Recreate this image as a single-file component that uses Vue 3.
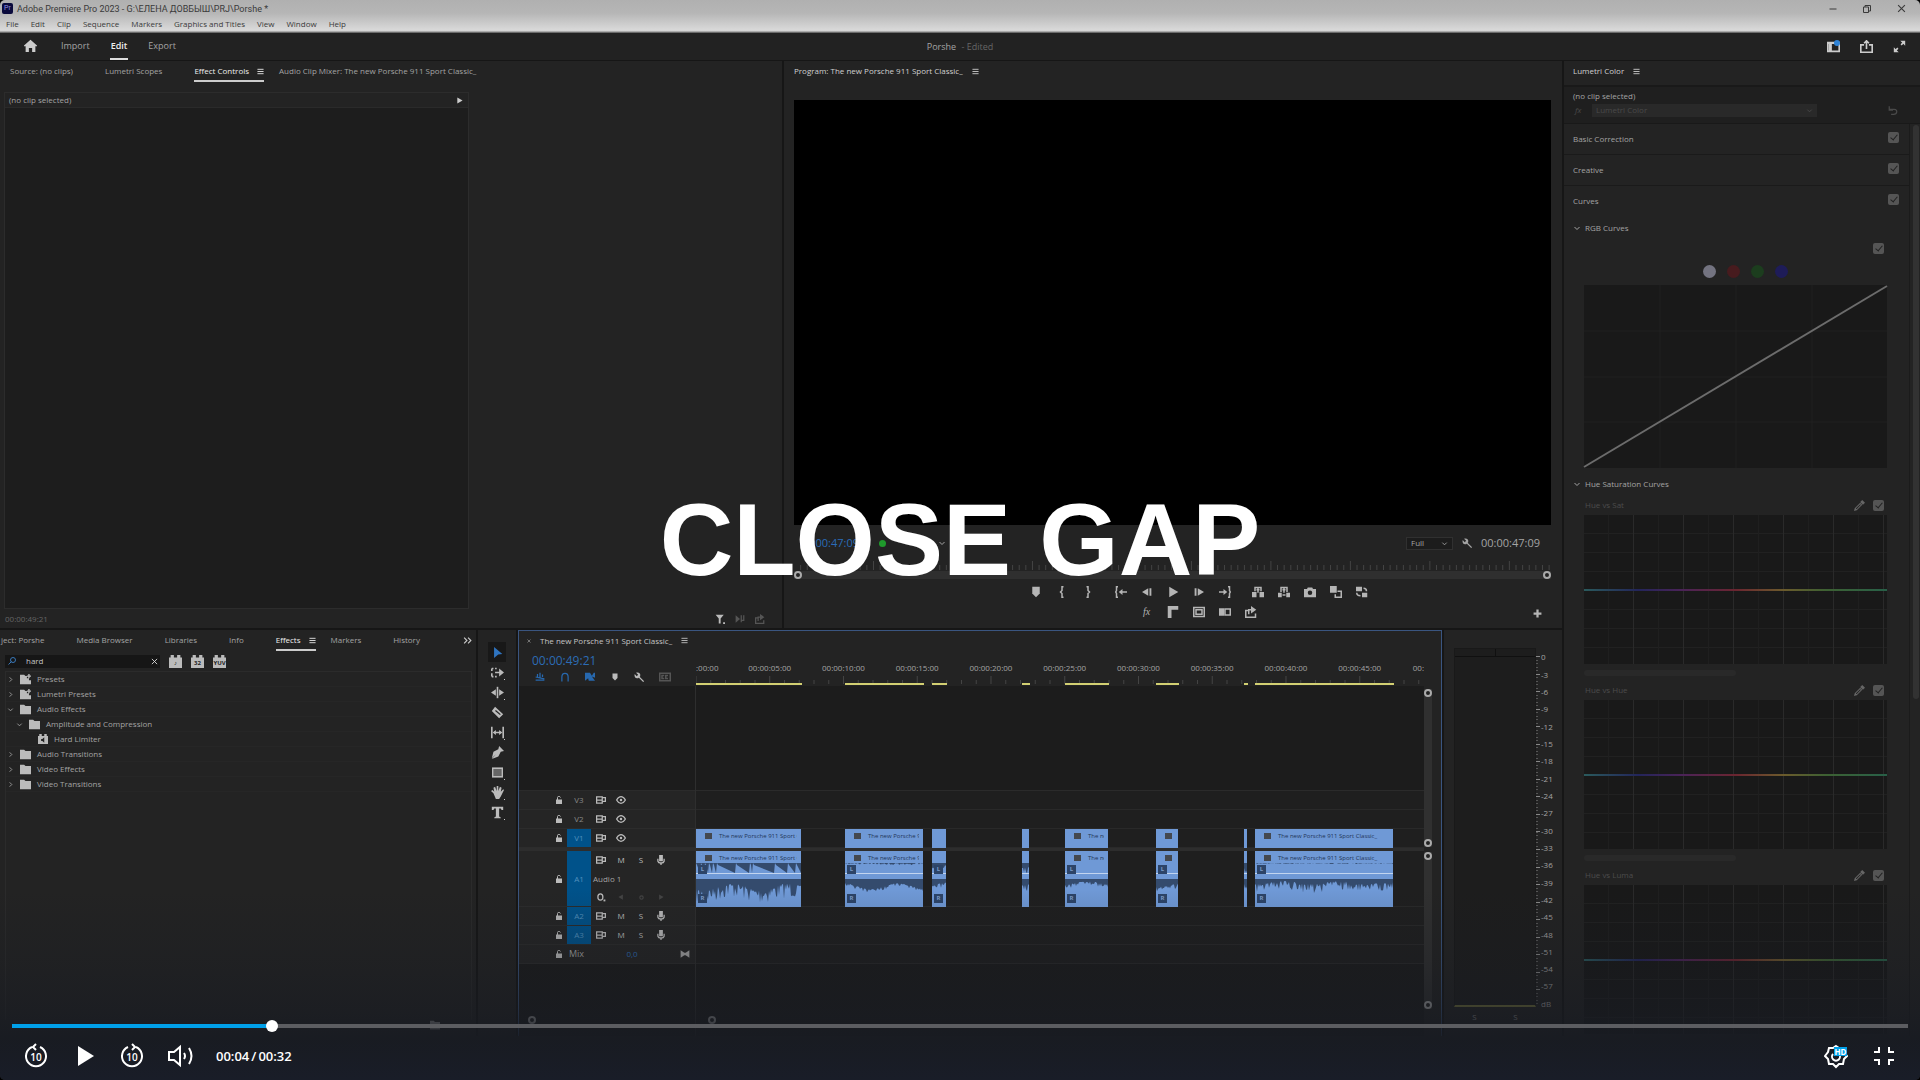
<script setup>
import { ref, h } from 'vue'

// filled and stroked outlines on a 16 x 16 grid
const icons = {
  home: { fill: 'M8 1 0 8v1h2v7h4v-5h4v5h4V9h2V8z' },
  workspace: { line: 'M1 3h14v11H1zM1 4h14', fill: 'M2 5h4v9H2z' },
  share: { line: 'M5 6H1v9h14V6h-4M8 11V2M5 4l3-3 3 3' },
  expand: { line: 'M10 6l4-4M6 10l-4 4', fill: 'M9 1h6v6zM1 9v6h6z' },
  menu: { line: 'M1 3h14M1 8h14M1 13h14' },
  min: { line: 'M1 8h14' },
  restore: { line: 'M1 4h10v11H1zM4 4V1h11v11h-4' },
  close: { line: 'M2 2l12 12M14 2 2 14' },
  down: { line: 'M3 6l5 5 5-5' },
  right: { line: 'M6 3l5 5-5 5' },
  more: { line: 'M2 3l5 5-5 5M9 3l5 5-5 5' },
  play: { fill: 'M3 1l12 7-12 7z' },
  back: { fill: 'M13 1 1 8l12 7z' },
  marker: { fill: 'M3 1h10v9l-5 5-5-5z' },
  braceL: { line: 'M10 1H8v5L6 8l2 2v5h2' },
  braceR: { line: 'M6 1h2v5l2 2-2 2v5H6' },
  goIn: { line: 'M4 1H2v5L1 8l1 2v5h2M9 8h7', fill: 'M5 8l5-4v8z' },
  goOut: { line: 'M12 1h2v5l1 2-1 2v5h-2M0 8h7', fill: 'M11 8 6 4v8z' },
  stepBack: { fill: 'M10 2 0 8l10 6zM12 2h3v12h-3z' },
  stepFwd: { fill: 'M6 2l10 6-10 6zM1 2h3v12H1z' },
  lift: { fill: 'M0 8h6v7H0zM10 8h6v7h-6z', line: 'M4 7V2h8v5M8 3v6M6 5h4' },
  extract: { fill: 'M0 9h5v6H0zM11 9h5v6h-5zM6 11h4v2H6z', line: 'M4 8V2h8v6M8 3v6M6 5h4' },
  camera: { fill: 'M0 4h4l1-2h6l1 2h4v11H0zM8 6a3 3 0 1 0 0 6 3 3 0 0 0 0-6z' },
  compare: { fill: 'M0 0h9v9H0z', line: 'M10 7h5v8H7v-4' },
  proxy: { fill: 'M0 1h8v6H0zM8 9h7v6H8z', line: 'M10 3c3 0 4 2 4 4M1 9c0 3 2 4 5 4' },
  rulers: { fill: 'M1 0h14v5H6v11H1z' },
  safe: { line: 'M1 2h14v12H1zM4 5h8v6H4z' },
  sides: { fill: 'M0 3h7v10H0z', line: 'M8 4h7v8H8z' },
  export: { line: 'M5 6H1v9h13v-5M5 11V5h5', fill: 'M8 0l7 5-7 5z' },
  skip: { fill: 'M1 2l7 6-7 6z', line: 'M10 2v11M14 2v8h-3' },
  plus: { fill: 'M6 1h4v5h5v4h-5v5H6v-5H1V6h5z' },
  wrench: { line: 'M6 6l8 8', fill: 'M1 3l3 3 2-2-3-3c4-1 7 1 6 5L6 9C2 10 0 7 1 3z' },
  filter: { fill: 'M1 1h13l-5 6v8H6V7zM13 13h3v3h-3z' },
  search: { line: 'M7 9l-6 6M10 1a5 5 0 1 0 0 10 5 5 0 0 0 0-10z' },
  folder: { fill: 'M0 1h6l2 2h8v12H0z' },
  preset: { fill: 'M0 1h6l2 2h2v3h3v3h3v6H0zM12 0h2v2h2v2h-2v2h-2V4h-2V2h2z' },
  brick: { fill: 'M2 3V0h4v3h4V0h4v3h2v13H0V3z' },
  effect: { fill: 'M2 3V0h4v3h4V0h4v3h2v13H0V3zM5 8v3h2l3 3V5L7 8z' },
  select: { fill: 'M3 0l12 10-6 1-6 5z' },
  trackSelect: { line: 'M1 3h2M5 3h2M1 13h2M5 13h2M1 3v3M1 9v4M5 8h7', fill: 'M10 3l6 5-6 5z' },
  ripple: { line: 'M8 1v14', fill: 'M6 4v8L0 8zM10 4v8l6-4z' },
  razor: { fill: 'M5 1l10 9-5 5L1 6zM5 6l1-1 6 5-1 1z' },
  slip: { line: 'M1 1v14M15 1v14M4 8h8', fill: 'M2 8l4-3v6zM14 8l-4-3v6z' },
  pen: { fill: 'M10 0l6 6-4 1-3 6-8 3 5-6-5 5 2-8 6-3z' },
  rect: { line: 'M1 2h14v12H1z' },
  hand: { fill: 'M3 9 0 6l2-1 2 2-1-5 2-1 2 5V0h2v6l2-5 2 1-1 5 3-3 1 1-4 8-2 3H6z' },
  type: { fill: 'M1 1h14v4h-2l-1-2h-2v10l2 1v1H4v-1l2-1V3H4L3 5H1z' },
  nest: { line: 'M1 13h14M4 3v5M8 1v9M12 4v4M1 8l14 3' },
  magnet: { line: 'M3 15V8c0-8 10-8 10 0v7' },
  linked: { fill: 'M0 1h8l3 5 3-5h2v8l-5-2 5 7H6l-1-4-5 4z' },
  cc: { line: 'M1 3h14v10H1zM7 6H4v4h3M12 6H9v4h3' },
  lock: { fill: 'M2 7h12v9H2z', line: 'M5 8V3c0-3 5-3 6 0' },
  sync: { line: 'M1 3h9v10H1zM1 8h9M11 4h4v6h-4' },
  eye: { line: 'M1 8c4-7 10-7 14 0-4 7-10 7-14 0z', fill: 'M8 6a2 2 0 1 0 0 4 2 2 0 0 0 0-4z' },
  mic: { fill: 'M5 0h6v10H5zM7 12h2v4H7z', line: 'M3 6v4c1 4 9 4 10 0V6' },
  key: { line: 'M7 3a4 5 0 1 0 0 10A4 5 0 0 0 7 3z', fill: 'M12 12h3v3h-3z' },
  dot: { line: 'M8 5a3 3 0 1 0 0 6 3 3 0 0 0 0-6z' },
  fit: { fill: 'M1 2l6 4h2l6-4v12l-6-4H7l-6 4z' },
  dropper: { fill: 'M12 0l4 4-3 3-4-4zM9 4l3 3-8 8-4 1 1-4zM9 6l-6 6v1h1l6-6z' },
  reset: { line: 'M2 7h8c6 0 5 8-1 8H5M2 2v6h6' }
}

const Icon = (props) => {
  const { fill, line } = icons[props.name]
  return h('svg', { viewBox: '0 0 16 16', width: props.size, height: props.size, 'aria-hidden': true }, [
    fill && h('path', { d: fill, fill: 'currentColor', 'fill-rule': 'evenodd' }),
    line && h('path', { d: line, fill: 'none', stroke: 'currentColor', 'stroke-width': 2 })
  ])
}
Icon.props = { name: String, size: { type: Number, default: 10 } }

const sequence = 'The new Porsche 911 Sport Classic_'
const menus = ['File', 'Edit', 'Clip', 'Sequence', 'Markers', 'Graphics and Titles', 'View', 'Window', 'Help']
const sourceTabs = ['Source: (no clips)', 'Lumetri Scopes', 'Effect Controls', 'Audio Clip Mixer: ' + sequence]
const effectTabs = ['ject: Porshe', 'Media Browser', 'Libraries', 'Info', 'Effects', 'Markers', 'History']

const query = ref('hard')
const tree = [
  { label: 'Presets', icon: 'preset', arrow: 'right', depth: 0 },
  { label: 'Lumetri Presets', icon: 'preset', arrow: 'right', depth: 0 },
  { label: 'Audio Effects', icon: 'folder', arrow: 'down', depth: 0 },
  { label: 'Amplitude and Compression', icon: 'folder', arrow: 'down', depth: 1 },
  { label: 'Hard Limiter', icon: 'effect', depth: 2 },
  { label: 'Audio Transitions', icon: 'folder', arrow: 'right', depth: 0 },
  { label: 'Video Effects', icon: 'folder', arrow: 'right', depth: 0 },
  { label: 'Video Transitions', icon: 'folder', arrow: 'right', depth: 0 }
]
const tools = ['select', 'trackSelect', 'ripple', 'razor', 'slip', 'pen', 'rect', 'hand', 'type']

const transport = [
  ['marker', 'braceL', 'braceR'],
  ['goIn', 'stepBack', 'play', 'stepFwd', 'goOut'],
  ['lift', 'extract', 'camera', 'compare', 'proxy']
]

// timeline geometry, in units of a 728-wide strip
const STRIP = 728
const pct = (n) => (n / STRIP) * 100 + '%'
const seconds = Array.from({ length: 50 }, (_, i) => i)
const labels = [1, 2, 3, 4, 5, 6, 7, 8, 9].map((i) => ({
  text: '00:00:' + String(i * 5).padStart(2, '0') + ':00',
  at: i * 73.75
}))

const wave = (w, base, spread, seed) => {
  let s = seed
  let points = '0,0'
  for (let x = 0; x <= w; x++) {
    s = (s * 16807) % 2147483647
    const r = s / 2147483647
    const swell = Math.sin(x / 9 + seed) * 0.3 + 0.7
    points += ` ${x},${Math.max(0, base * swell + (r * r) * spread).toFixed(1)}`
  }
  return points + ` ${w},0`
}
// lopsided bursts, each one growing towards its right edge
const bursts = (w, floor, depth) => {
  let points = '0,0'
  const starts = [0, 5, 9, 13, 17, 21, 40, 54, 57, 79, 92, 100, 106]
  starts.slice(0, -1).forEach((a, i) => {
    const b = Math.min(starts[i + 1] - 1, w)
    points += ` ${a},${floor} ${a + 1},${floor + depth * 0.2} ${b},${floor + depth} ${b + 1},${floor}`
  })
  return points + ` ${w},0`
}

const clips = [
  { at: 0, w: 105, top: bursts(105, 0, 10), low: wave(105, 11, 15, 7) },
  { at: 149, w: 78, top: wave(78, 0, 2, 11), low: wave(78, 10, 4, 5) },
  { at: 236, w: 14, top: wave(14, 6, 8, 3), low: wave(14, 9, 7, 3) },
  { at: 326, w: 7, top: wave(7, 6, 7, 9), low: wave(7, 8, 7, 9) },
  { at: 369, w: 43, top: '', low: wave(43, 6, 4, 21) },
  { at: 460, w: 22, top: '', low: wave(22, 8, 6, 14) },
  { at: 548, w: 3, top: wave(3, 8, 7, 6), low: wave(3, 8, 7, 6) },
  { at: 559, w: 138, top: wave(138, 0, 1, 17), low: wave(138, 5, 9, 33) }
]

const db = Array.from({ length: 20 }, (_, i) => (i ? String(-3 * i) : '0')).concat('dB')
const hueCurves = ['Hue vs Sat', 'Hue vs Hue', 'Hue vs Luma']
const progress = ref(13.5)
</script>

<template>
  <div class="player">
    <header class="titlebar">
      <div class="title-row">
        <span class="logo">Pr</span>
        <span class="title">Adobe Premiere Pro 2023 - G:\ЕЛЕНА ДОВБЫШ\PRJ\Porshe *</span>
        <div class="window-buttons">
          <button aria-label="Minimize"><Icon name="min" :size="8" /></button>
          <button aria-label="Restore"><Icon name="restore" :size="8" /></button>
          <button aria-label="Close"><Icon name="close" :size="9" /></button>
        </div>
      </div>
      <nav class="menu-row">
        <button v-for="m in menus" :key="m">{{ m }}</button>
      </nav>
    </header>

    <div class="appbar">
      <nav class="modes">
        <button aria-label="Home" class="home"><Icon name="home" :size="13" /></button>
        <button>Import</button>
        <button class="active">Edit</button>
        <button>Export</button>
      </nav>
      <div class="project">Porshe <span>- Edited</span></div>
      <div class="app-actions">
        <button aria-label="Workspaces" class="notify"><Icon name="workspace" :size="13" /></button>
        <button aria-label="Share"><Icon name="share" :size="13" /></button>
        <button aria-label="Full screen"><Icon name="expand" :size="13" /></button>
      </div>
    </div>

    <main class="workspace">
      <div class="upper">
        <section class="panel source">
          <nav class="tabs">
            <button v-for="t in sourceTabs" :key="t" :class="{ active: t === 'Effect Controls' }">
              {{ t }}<Icon v-if="t === 'Effect Controls'" name="menu" :size="7" />
            </button>
          </nav>
          <div class="controls-body">
            <div class="clip-row">(no clip selected)<Icon name="play" :size="7" /></div>
          </div>
          <footer class="source-footer">
            <span>00:00:49:21</span>
            <div>
              <Icon name="filter" class="lit" />
              <Icon name="skip" />
              <Icon name="export" />
            </div>
          </footer>
        </section>

        <section class="panel program">
          <nav class="tabs">
            <button class="strong">Program: {{ sequence }}<Icon name="menu" :size="7" /></button>
          </nav>
          <div class="video"></div>
          <div class="monitor-row">
            <span class="timecode blue">00:00:47:09</span>
            <i class="green"></i>
            <Icon name="down" :size="8" class="fit-arrow" />
            <label class="quality">
              <select aria-label="Playback resolution"><option>Full</option></select>
              <Icon name="down" :size="7" />
            </label>
            <Icon name="wrench" :size="11" />
            <span class="timecode">00:00:47:09</span>
          </div>
          <svg class="monitor-ruler" width="100%" height="10">
            <line v-for="i in 114" :key="i" :x1="i * 0.875 + '%'" :x2="i * 0.875 + '%'" :y1="i % 12 ? 4 : 0" y2="9" />
          </svg>
          <div class="scrub"><i></i><i></i></div>
          <div class="transport">
            <div v-for="(group, g) in transport" :key="g">
              <button v-for="b in group" :key="b" :aria-label="b"><Icon :name="b" :size="b.startsWith('step') ? 10 : 12" /></button>
            </div>
          </div>
          <div class="transport second">
            <div>
              <button aria-label="Effects" class="fx">fx</button>
              <button v-for="b in ['rulers', 'safe', 'sides', 'export']" :key="b" :aria-label="b"><Icon :name="b" :size="12" /></button>
            </div>
            <button class="add" aria-label="Button editor"><Icon name="plus" :size="9" /></button>
          </div>
        </section>
      </div>

      <div class="lower">
        <section class="panel effects">
          <nav class="tabs">
            <button v-for="t in effectTabs" :key="t" :class="{ active: t === 'Effects' }">
              {{ t }}<Icon v-if="t === 'Effects'" name="menu" :size="7" />
            </button>
            <button class="overflow" aria-label="More panels"><Icon name="more" :size="9" /></button>
          </nav>
          <div class="search-row">
            <label class="search">
              <Icon name="search" :size="8" />
              <input v-model="query" type="text" aria-label="Search effects" />
              <Icon name="close" :size="7" class="clear" />
            </label>
            <button v-for="b in ['♪', '32', 'YUV']" :key="b" class="brick"><Icon name="brick" :size="13" /><span>{{ b }}</span></button>
          </div>
          <ul class="tree">
            <li v-for="n in tree" :key="n.label" :class="'depth-' + n.depth">
              <Icon v-if="n.arrow" :name="n.arrow" :size="7" class="arrow" />
              <Icon :name="n.icon" :size="n.icon === 'effect' ? 10 : 11" class="kind" />
              {{ n.label }}
            </li>
          </ul>
          <footer class="effects-footer"><Icon name="folder" /></footer>
        </section>

        <nav class="panel tools">
          <button v-for="t in tools" :key="t" :aria-label="t" :class="[t, { active: t === 'select' }]">
            <Icon :name="t" :size="t === 'select' ? 11 : 13" />
          </button>
        </nav>

        <section class="panel timeline">
          <div class="tl-title">
            <Icon name="close" :size="4" />
            <span>{{ sequence }}</span>
            <Icon name="menu" :size="7" />
          </div>
          <div class="tl-top">
            <div class="tl-info">
              <span class="tl-time">00:00:49:21</span>
              <div class="tl-icons">
                <span class="on"><Icon name="nest" /></span>
                <span class="on"><Icon name="magnet" /></span>
                <span class="on"><Icon name="linked" /></span>
                <span><Icon name="marker" :size="8" /></span>
                <span><Icon name="wrench" :size="11" /></span>
                <span class="off"><Icon name="cc" :size="12" /></span>
              </div>
            </div>
            <div class="ruler">
              <span class="tick-label first">:00:00</span>
              <span v-for="l in labels" :key="l.text" class="tick-label" :style="{ left: pct(l.at) }">{{ l.text }}</span>
              <span class="tick-label last">00:</span>
              <svg width="100%" height="10">
                <line v-for="s in seconds" :key="s" :x1="pct(s * 14.75)" :x2="pct(s * 14.75)" :y1="s % 5 ? 4 : 0" y2="8" />
              </svg>
              <i v-for="c in clips" :key="c.at" class="render-bar" :style="{ left: pct(c.at), width: pct(c.w + 1) }"></i>
            </div>
          </div>
          <div class="tl-body">
            <div class="heads">
              <div class="spacer"></div>
              <div v-for="v in ['V3', 'V2', 'V1']" :key="v" class="head">
                <span class="cell lock"><Icon name="lock" :size="8" /></span>
                <span class="cell target" :class="{ patched: v === 'V1' }">{{ v }}</span>
                <span class="cell"><Icon name="sync" /></span>
                <span class="cell"><Icon name="eye" /></span>
              </div>
              <div class="divider"></div>
              <div class="head tall">
                <span class="cell lock"><Icon name="lock" :size="8" /></span>
                <span class="cell target patched">A1</span>
                <div class="audio-cells">
                  <div><span class="cell"><Icon name="sync" /></span><span class="cell">M</span><span class="cell">S</span><span class="cell"><Icon name="mic" /></span></div>
                  <div class="audio-name">Audio 1</div>
                  <div><span class="cell"><Icon name="key" /></span><span class="cell off"><Icon name="back" :size="6" /></span><span class="cell off"><Icon name="dot" :size="9" /></span><span class="cell off"><Icon name="play" :size="6" /></span></div>
                </div>
              </div>
              <div v-for="a in ['A2', 'A3']" :key="a" class="head">
                <span class="cell lock"><Icon name="lock" :size="8" /></span>
                <span class="cell target patched">{{ a }}</span>
                <span class="cell"><Icon name="sync" /></span><span class="cell">M</span><span class="cell">S</span><span class="cell"><Icon name="mic" /></span>
              </div>
              <div class="head mix">
                <span class="cell lock"><Icon name="lock" :size="8" /></span>
                <span class="mix-name">Mix</span>
                <span class="mix-value">0,0</span>
                <Icon name="fit" />
              </div>
              <div class="tl-scroll"><i></i><i></i></div>
            </div>
            <div class="tracks">
              <div class="spacer"></div>
              <div class="track"></div>
              <div class="track"></div>
              <div class="track">
                <div v-for="c in clips" :key="c.at" class="clip" :style="{ left: pct(c.at), width: pct(c.w) }">
                  <div v-if="c.w > 20" class="clip-name"><i></i><span>{{ sequence }}</span></div>
                </div>
              </div>
              <div class="divider"></div>
              <div class="track tall">
                <div v-for="c in clips" :key="c.at" class="clip audio" :style="{ left: pct(c.at), width: pct(c.w) }">
                  <div v-if="c.w > 20" class="clip-name"><i></i><span>{{ sequence }}</span></div>
                  <svg :viewBox="`0 0 ${c.w} 56`" preserveAspectRatio="none">
                    <polygon :points="c.top" transform="translate(0 12)" />
                    <polygon :points="c.low" transform="translate(0 28)" />
                    <path :d="`M0 22.5H${c.w}`" />
                  </svg>
                  <template v-if="c.w > 10"><b>L</b><b class="low">R</b></template>
                </div>
              </div>
              <div class="track"></div>
              <div class="track"></div>
              <div class="track"></div>
            </div>
            <div class="tl-rails">
              <div class="rail"><i></i><i></i></div>
              <div class="rail"><i></i><i></i></div>
            </div>
          </div>
        </section>

        <section class="panel meters">
          <div class="meter-box"><div class="peak"></div></div>
          <div class="meter-ticks"></div>
          <div class="db"><span v-for="d in db" :key="d">{{ d }}</span></div>
          <div class="solo"><span>S</span><span>S</span></div>
        </section>
      </div>

      <aside class="panel lumetri">
        <nav class="tabs">
          <button class="strong">Lumetri Color<Icon name="menu" :size="7" /></button>
        </nav>
        <div class="lm-clip">
          <span>(no clip selected)</span>
          <div class="lm-effect">
            <em>fx</em>
            <label>
              <select aria-label="Effect" disabled><option>Lumetri Color</option></select>
              <Icon name="down" :size="7" />
            </label>
            <Icon name="reset" />
          </div>
        </div>
        <div class="lm-scroll">
          <div class="lm-content">
            <label v-for="s in ['Basic Correction', 'Creative', 'Curves']" :key="s" class="lm-section">
              {{ s }}<input type="checkbox" checked />
            </label>
            <h3><Icon name="down" :size="8" />RGB Curves</h3>
            <div class="lm-inner">
              <div class="rgb-check"><input type="checkbox" checked aria-label="RGB Curves" /></div>
              <div class="channels"><i></i><i></i><i></i><i></i></div>
              <svg class="curve" viewBox="0 0 303 183" preserveAspectRatio="none">
                <path class="grid" d="M76 0v183M152 0v183M228 0v183M0 46h303M0 92h303M0 137h303" />
                <path class="diag" d="M0 182L303 1" />
              </svg>
            </div>
            <h3 class="hue-title"><Icon name="down" :size="8" />Hue Saturation Curves</h3>
            <div class="lm-inner">
              <div v-for="c in hueCurves" :key="c" class="hue">
                <label>{{ c }}<Icon name="dropper" :size="11" /><input type="checkbox" checked /></label>
                <div class="hue-graph"></div>
                <div class="hue-scroll"></div>
              </div>
            </div>
          </div>
          <div class="lm-bar"><i></i></div>
        </div>
      </aside>
    </main>

    <div class="status"></div>

    <h1 class="caption">CLOSE GAP</h1>

    <div class="shade">
      <input v-model="progress" class="seek" type="range" min="0" max="100" step="0.1" aria-label="Seek" :style="{ '--done': progress + '%' }" />
      <div class="buttons">
        <button aria-label="Back 10 seconds">
          <svg width="24" height="26" viewBox="0 0 24 26">
            <path d="M8 4a10 10 0 1 0 8 0M12 1l-3 3 3 3" />
            <text x="12" y="18">10</text>
          </svg>
        </button>
        <button aria-label="Play"><svg width="24" height="26" viewBox="0 0 24 26"><path class="solid" d="M6 3l16 10L6 23z" /></svg></button>
        <button aria-label="Forward 10 seconds">
          <svg width="24" height="26" viewBox="0 0 24 26">
            <path d="M8 4a10 10 0 1 0 8 0M12 1l3 3-3 3" />
            <text x="12" y="18">10</text>
          </svg>
        </button>
        <button aria-label="Volume" class="volume">
          <svg width="26" height="26" viewBox="0 0 26 26"><path d="M1 9h5l6-5v18l-6-5H1zM16 10q2 3 0 6M21 5q5 8 0 16" /></svg>
        </button>
        <span class="clock">00:04<i>/</i>00:32</span>
        <button aria-label="Settings" class="gear">
          <svg width="24" height="26" viewBox="0 0 24 26">
            <path d="M12 3l3 2 4 0 1 4 3 4-3 3-1 5-4 0-3 3-3-3-4 0-1-5-3-3 3-4 1-4 4 0z" />
            <path d="M9 11a4 4 0 1 0 6 0" />
          </svg>
          <span>HD</span>
        </button>
        <button aria-label="Exit full screen">
          <svg width="22" height="26" viewBox="0 0 22 26"><path d="M1 9h5V4M16 4v5h5M1 17h5v5M21 17h-5v5" /></svg>
        </button>
      </div>
    </div>
  </div>
</template>

<style>
body {
  background: #000;
}
</style>

<style scoped>
* {
  box-sizing: border-box;
}

.player {
  position: relative;
  display: flex;
  flex-direction: column;
  height: 100vh;
  overflow: hidden;
  border-radius: 5px;
  background: #161616;
  color: #a4a4a4;
  font: 8px/12px 'Open Sans', 'Noto Sans', sans-serif;
}

button {
  display: flex;
  align-items: center;
  justify-content: center;
  padding: 0;
  border: 0;
  background: none;
  color: inherit;
  font: inherit;
  white-space: nowrap;
}

svg {
  display: block;
  flex: none;
}

select {
  appearance: none;
  width: 100%;
  border: 0;
  background: none;
  color: inherit;
  font: inherit;
  opacity: 1;
}

/* title and menu bars */
.titlebar {
  height: 33px;
  flex: none;
  background: linear-gradient(#b0b0b0, #b6b6b6 40%, #dadada 92%, #888 98%, #111);
  color: #3a3a3a;
}

.title-row {
  display: flex;
  align-items: center;
  height: 17px;
  padding-left: 2px;
  font: 9px/12px Roboto, sans-serif;
}

.logo {
  width: 11px;
  height: 11px;
  margin-right: 4px;
  border-radius: 2px;
  background: #0a0a3c;
  color: #8f8fe0;
  font-size: 7px;
  line-height: 11px;
  text-align: center;
}

.window-buttons {
  display: flex;
  gap: 26px;
  margin-left: auto;
  padding-right: 14px;
}

.menu-row {
  display: flex;
  gap: 12px;
  height: 14px;
  padding-left: 6px;
}

/* application bar */
.appbar {
  display: grid;
  grid-template-columns: 1fr auto 1fr;
  align-items: center;
  flex: none;
  height: 27px;
  background: #222;
  font-size: 9px;
}

.modes {
  display: flex;
  gap: 19px;
  height: 27px;
  padding-left: 23px;
}

.modes button {
  padding: 0 1px;
  border-bottom: 2px solid transparent;
}

.modes .home {
  margin-right: 3px;
  color: #ccc;
}

.modes .active {
  border-color: #ddd;
  color: #eee;
  font-weight: 600;
}

.project span {
  margin-left: 3px;
  color: #666;
}

.app-actions {
  display: flex;
  justify-content: flex-end;
  gap: 20px;
  padding-right: 14px;
  color: #ccc;
}

.notify {
  position: relative;
}

.notify::after {
  content: '';
  position: absolute;
  top: 0;
  right: 0;
  width: 6px;
  height: 6px;
  border-radius: 50%;
  background: #2f83d6;
}

/* panel grid */
.workspace {
  display: grid;
  flex: 1;
  grid-template-columns: minmax(0, 1fr) 356px;
  grid-template-rows: 569fr 407fr;
  gap: 2px;
  min-height: 0;
  padding-top: 1px;
}

.upper {
  display: grid;
  grid-template-columns: 782fr 778fr;
  gap: 2px;
  min-height: 0;
}

.lower {
  display: grid;
  grid-column: 1;
  grid-template-columns: 476px 38px minmax(0, 1fr) 118px;
  gap: 2px;
  min-height: 0;
}

.panel {
  min-width: 0;
  min-height: 0;
  background: #232323;
}

.tabs {
  display: flex;
  gap: 32px;
  flex: none;
  height: 21px;
  padding-top: 1px;
}

.tabs button {
  gap: 9px;
  height: 20px;
  border-bottom: 2px solid transparent;
}

.tabs .active {
  gap: 8px;
  margin-right: -17px;
  border-color: #ccc;
  color: #eee;
}

.tabs .strong {
  color: #d0d0d0;
}

/* effect controls */
.source {
  display: flex;
  flex-direction: column;
}

.source .tabs {
  padding-left: 10px;
}

.controls-body {
  flex: 1;
  width: calc(60% - 4px);
  margin: 10px 0 0 4px;
  border: 1px solid #2c2c2c;
  background: #1d1d1d;
}

.clip-row {
  display: flex;
  align-items: center;
  justify-content: space-between;
  height: 15px;
  padding: 0 5px 0 4px;
  border-bottom: 1px solid #2a2a2a;
  background: #232323;
}

.clip-row svg {
  color: #ccc;
}

.source-footer {
  display: flex;
  align-items: center;
  justify-content: space-between;
  height: 19px;
  padding: 0 17px 0 5px;
  color: #666;
}

.source-footer div {
  display: flex;
  gap: 10px;
  color: #555;
}

.source-footer .lit {
  color: #bbb;
}

/* program monitor */
.program {
  display: flex;
  flex-direction: column;
  padding: 0 11px 0 10px;
}

.video {
  flex: 1;
  margin-top: 18px;
  background: #000;
}

.monitor-row {
  display: flex;
  align-items: center;
  height: 36px;
}

.timecode {
  font-size: 11px;
}

.blue {
  padding-left: 6px;
  color: #2a6cb8;
}

.green {
  width: 7px;
  height: 7px;
  margin: 0 52px 0 20px;
  border-radius: 50%;
  background: #1f9a2c;
}

.quality {
  display: flex;
  align-items: center;
  width: 47px;
  height: 13px;
  margin: 0 9px 0 auto;
  padding: 0 4px;
  border: 1px solid #303030;
  background: #1c1c1c;
}

.monitor-row > .timecode:last-child {
  padding: 0 11px 0 8px;
}

.monitor-ruler line,
.ruler line {
  stroke: #444;
}

.scrub {
  display: flex;
  justify-content: space-between;
  height: 8px;
  background: #2f2f2f;
}

.scrub i,
.rail i,
.tl-scroll i {
  width: 8px;
  height: 8px;
  border: 2px solid #aaa;
  border-radius: 50%;
  background: #222;
}

.transport {
  display: flex;
  justify-content: center;
  gap: 7px;
  padding: 3px 0 0 52px;
  color: #b5b5b5;
}

.transport div {
  display: flex;
}

.transport div button {
  width: 26px;
  height: 20px;
}

.second {
  position: relative;
  height: 26px;
  padding-top: 0;
}

.fx {
  font: italic 10px/12px 'Liberation Serif', serif;
}

.add {
  position: absolute;
  top: 7px;
  right: 9px;
}

/* effects browser */
.effects {
  display: flex;
  flex-direction: column;
  padding: 0 4px 0 1px;
}

.effects .overflow {
  margin-left: auto;
  color: #ccc;
}

.search-row {
  display: flex;
  align-items: center;
  gap: 9px;
  height: 20px;
  padding-left: 4px;
}

.search {
  display: flex;
  align-items: center;
  width: 155px;
  height: 13px;
  padding: 0 2px 0 3px;
  background: #161616;
  color: #3a78b8;
}

.search input {
  flex: 1;
  min-width: 0;
  padding: 0 10px;
  border: 0;
  outline: 0;
  background: none;
  color: #c4c4c4;
  font: inherit;
}

.clear {
  color: #ddd;
}

.brick {
  position: relative;
  color: #bbb;
}

.brick span {
  position: absolute;
  top: 4px;
  color: #222;
  font-size: 6px;
  line-height: 8px;
  font-weight: 700;
}

.tree {
  flex: 1;
  margin: 0 0 0 4px;
  padding: 0;
  border: 1px solid #2b2b2b;
  border-bottom: 0;
  list-style: none;
}

.tree li {
  display: flex;
  align-items: center;
  height: 15px;
  padding-left: 1px;
  border-bottom: 1px solid #262626;
}

.tree .depth-1 {
  padding-left: 10px;
}

.tree .depth-2 {
  padding-left: 32px;
}

.arrow {
  margin-right: 6px;
}

.kind {
  margin-right: 6px;
  color: #bbb;
}

.effects-footer {
  display: flex;
  justify-content: flex-end;
  height: 16px;
  padding-right: 32px;
}

/* tools */
.tools {
  display: flex;
  flex-direction: column;
  align-items: center;
  padding-top: 12px;
  color: #bbb;
}

.tools button {
  position: relative;
  width: 18px;
  height: 20px;
}

.tools button::after {
  content: '';
  position: absolute;
  right: 1px;
  bottom: 2px;
  width: 1px;
  height: 1px;
  background: #ccc;
}

.tools .active {
  background: #181818;
  color: #2f74c0;
}

.tools .active::after,
.tools .pen::after,
.tools .razor::after {
  display: none;
}

.tools .rect svg {
  background: #666;
  background-clip: content-box;
  padding: 1px;
}

/* timeline */
.timeline {
  display: flex;
  flex-direction: column;
  overflow: hidden;
  border: 1px solid #3a5580;
  border-bottom: 0;
}

.tl-title {
  display: flex;
  align-items: center;
  gap: 9px;
  height: 19px;
  padding-left: 8px;
  color: #c4c4c4;
}

.tl-top,
.tl-body {
  display: grid;
  grid-template-columns: 177px minmax(0, 1fr);
}

.tl-top {
  height: 36px;
  padding-right: 17px;
}

.tl-info {
  padding: 2px 0 0 8px;
}

.tl-time {
  display: block;
  padding-left: 5px;
  color: #2c6cb5;
  font-size: 12px;
  line-height: 18px;
}

.tl-icons {
  display: flex;
  height: 14px;
  color: #bbb;
}

.tl-icons span {
  display: flex;
  align-items: center;
  justify-content: center;
  width: 25px;
}

.tl-icons .on {
  color: #2768ae;
}

.tl-icons .off {
  color: #555;
}

.ruler {
  position: relative;
  overflow: hidden;
}

.tick-label {
  position: absolute;
  top: 12px;
  transform: translateX(-50%);
}

.tick-label.first {
  left: 0;
  transform: none;
}

.tick-label.last {
  right: 0;
  transform: none;
}

.ruler svg {
  position: absolute;
  bottom: 0;
}

.render-bar {
  position: absolute;
  bottom: 1px;
  height: 2px;
  background: #d2cf72;
}

.tl-body {
  flex: 1;
  grid-template-columns: 177px minmax(0, 1fr) 8px;
  min-height: 0;
  padding-right: 9px;
  background: #232323;
}

.heads,
.tracks {
  background: #1c1c1c;
}

.heads {
  display: flex;
  flex-direction: column;
  border-right: 1px solid #2e2e2e;
}

.spacer {
  flex: none;
  height: 105px;
  border-bottom: 1px solid #2b2b2b;
}

.head {
  display: flex;
  flex: none;
  height: 19px;
  border-bottom: 1px solid #2c2c2c;
  background: #252525;
}

.head.tall,
.track.tall {
  height: 56px;
}

.cell {
  display: flex;
  align-items: center;
  justify-content: center;
  width: 20px;
  color: #bbb;
}

.cell.off {
  color: #444;
}

.cell.lock {
  justify-content: flex-end;
  width: 48px;
  padding-right: 4px;
}

.cell.target {
  width: 24px;
  color: #888;
}

.cell.patched {
  background: #00528a;
  color: #5190bd;
}

.audio-cells {
  display: grid;
  grid-template-rows: 1fr 1fr 1fr;
}

.audio-cells div {
  display: flex;
}

.audio-cells .audio-name {
  align-items: center;
  padding-left: 2px;
}

.divider {
  flex: none;
  height: 3px;
  background: #2d2d2d;
}

.mix {
  align-items: center;
}

.mix-name {
  margin-left: 2px;
  font-size: 9px;
}

.mix-value {
  margin: 0 auto;
  color: #2c6cb5;
}

.mix > svg {
  margin-right: 5px;
}

.tl-scroll {
  position: relative;
  z-index: 1;
  display: flex;
  justify-content: space-between;
  width: 197px;
  margin-top: auto;
  padding: 0 0 12px 9px;
}

.track {
  position: relative;
  height: 19px;
  border-bottom: 1px solid #292929;
  background: #1f1f1f;
}

.clip {
  position: absolute;
  top: 0;
  height: 19px;
  overflow: hidden;
  background: #6f99d6;
}

.clip.audio {
  height: 56px;
}

.clip-name {
  display: flex;
  align-items: center;
  gap: 7px;
  height: 14px;
  margin-right: 4px;
  padding-left: 9px;
  overflow: hidden;
  color: #1f3556;
  font-size: 6px;
  white-space: nowrap;
}

.clip-name i {
  flex: none;
  width: 7px;
  height: 6px;
  background: #44484f;
}

.clip svg {
  position: absolute;
  top: 0;
  width: 100%;
  height: 56px;
}

.clip polygon {
  fill: #344b6d;
}

.clip path {
  stroke: #c3d5ef;
}

.clip b {
  position: absolute;
  top: 14px;
  left: 2px;
  width: 9px;
  height: 9px;
  background: #2c4468;
  color: #7d9cc9;
  font-size: 6px;
  line-height: 9px;
  text-align: center;
}

.clip .low {
  top: 43px;
}

.tl-rails {
  display: grid;
  grid-template-rows: 158px 1fr;
  gap: 5px;
  padding: 3px 0 27px;
}

.rail {
  display: flex;
  flex-direction: column;
  justify-content: space-between;
  background: #303030;
}

/* audio meters */
.meters {
  display: grid;
  grid-template-columns: 82px 5px 1fr;
  grid-template-rows: minmax(0, 1fr) 29px;
  padding: 18px 0 0 10px;
}

.meter-box {
  border: 1px solid #191919;
  border-bottom: 2px solid #77763d;
  background: #1d1d1d;
}

.peak {
  height: 8px;
  border-bottom: 1px solid #101010;
  background: linear-gradient(#101010, #101010) center / 1px 100% no-repeat;
}

.meter-ticks {
  margin-top: 8px;
  background: repeating-linear-gradient(#888 0 1px, transparent 1px 5%) 0 0 / 4px 100% no-repeat,
    repeating-linear-gradient(#555 0 1px, transparent 1px 1%) 0 0 / 2px 100% no-repeat;
}

.db {
  display: flex;
  flex-direction: column;
  justify-content: space-between;
  margin: 3px 0 -3px;
}

.solo {
  display: flex;
  justify-content: space-around;
  padding-top: 4px;
}

/* lumetri */
.lumetri {
  display: flex;
  flex-direction: column;
  grid-row: 1 / 3;
  grid-column: 2;
  overflow: hidden;
}

.lumetri .tabs {
  padding-left: 9px;
}

.lm-clip {
  height: 39px;
  margin-top: 3px;
  padding: 2px 22px 0 9px;
  border: solid #191919;
  border-width: 2px 0 1px;
  background: #1f1f1f;
}

.lm-clip > span {
  display: block;
  line-height: 13px;
}

.lm-effect {
  display: flex;
  align-items: center;
  height: 16px;
  color: #4a4a4a;
}

.lm-effect em {
  width: 19px;
  font-size: 8px;
  padding-left: 2px;
}

.lm-effect label {
  display: flex;
  align-items: center;
  width: 225px;
  height: 13px;
  padding: 0 4px;
  background: #292929;
}

.lm-effect > svg {
  margin-left: auto;
}

.lm-scroll {
  display: flex;
  flex: 1;
  min-height: 0;
  overflow: hidden;
}

.lm-content {
  flex: 1;
}

.lm-section {
  display: flex;
  align-items: center;
  justify-content: space-between;
  height: 31px;
  padding: 0 10px 0 9px;
  border-bottom: 1px solid #1a1a1a;
}

.lm-section:nth-child(3) {
  border-color: transparent;
}

input[type='checkbox'] {
  position: relative;
  appearance: none;
  width: 11px;
  height: 11px;
  margin: 0;
  border-radius: 2px;
  background: #555;
}

.lm-section input[type='checkbox'] {
  margin-bottom: 4px;
}

input[type='checkbox']::after {
  content: '';
  position: absolute;
  top: 1px;
  left: 4px;
  width: 3px;
  height: 6px;
  border: solid #222;
  border-width: 0 1px 1px 0;
  transform: rotate(40deg);
}

h3 {
  display: flex;
  align-items: center;
  gap: 4px;
  height: 22px;
  margin: 0 0 0 9px;
  font: inherit;
}

.lm-inner {
  padding: 0 22px 0 20px;
}

.rgb-check {
  display: flex;
  justify-content: flex-end;
  height: 18px;
  padding: 4px 3px 0;
}

.channels {
  display: flex;
  justify-content: center;
  gap: 11px;
  padding: 8px 0 7px 20px;
}

.channels i {
  width: 13px;
  height: 13px;
  border-radius: 50%;
  background: #737380;
}

.channels i:nth-child(2) {
  background: #471b1e;
}

.channels i:nth-child(3) {
  background: #1c3d1e;
}

.channels i:nth-child(4) {
  background: #1e1c58;
}

.curve {
  width: 100%;
  height: 183px;
  background: #191919;
  overflow: visible;
}

.grid {
  fill: none;
  stroke: #202020;
}

.diag {
  stroke: #6c6c6c;
  stroke-width: 2;
}

.hue-title {
  margin-top: 5px;
}

.hue {
  height: 185px;
}

.hue label {
  display: flex;
  align-items: center;
  gap: 8px;
  height: 20px;
  padding: 0 3px 0 1px;
  color: #4c4c4c;
}

.hue label svg {
  margin-left: auto;
  color: #666;
}

.hue-graph {
  display: flex;
  align-items: center;
  height: 149px;
  background: repeating-linear-gradient(90deg, transparent 0 49px, #2a2a2a 49px 50px),
    repeating-linear-gradient(90deg, transparent 0 24px, #1f1f1f 24px 25px),
    repeating-linear-gradient(transparent 0 18px, #212121 18px 19px), #191919;
}

.hue-graph::before {
  content: '';
  flex: 1;
  height: 2px;
  background: linear-gradient(90deg, #2a5a5c, #23255a 18%, #4a2358 32%, #6b2530 50%, #6b5b2c 66%, #3d6133 80%, #286048);
}

.hue-scroll {
  width: 50%;
  height: 6px;
  margin-top: 6px;
  border-radius: 3px;
  background: #292929;
}

.lm-bar {
  width: 11px;
  padding: 1px 1px 0 3px;
  border-left: 1px solid #1b1b1b;
}

.lm-bar i {
  display: block;
  height: 63%;
  border-radius: 3px;
  background: #323232;
}

.status {
  flex: none;
  height: 44px;
  background: #222;
}

/* video overlay */
.caption {
  position: absolute;
  z-index: 2;
  top: 50%;
  width: 100%;
  margin: 0;
  color: #fff;
  font: 700 102px/122px 'Liberation Sans', Arial, sans-serif;
  text-align: center;
  transform: translateY(-50%);
}

.shade {
  position: absolute;
  z-index: 2;
  bottom: 0;
  display: flex;
  flex-direction: column;
  justify-content: flex-end;
  width: 100%;
  height: 190px;
  padding: 0 12px 9px;
  background: linear-gradient(transparent, rgba(24, 27, 34, 0.3) 38%, rgba(24, 27, 34, 0.6) 62%, rgba(24, 27, 34, 0.94) 80%, #191d28);
  color: #fff;
}

.seek {
  appearance: none;
  width: 100%;
  height: 4px;
  margin: 0 0 12px;
  background: linear-gradient(90deg, #00a0e9 var(--done), #5c5d61 var(--done));
}

.seek::-webkit-slider-thumb {
  appearance: none;
  width: 12px;
  height: 12px;
  border-radius: 50%;
  background: #fff;
}

.buttons {
  display: flex;
  align-items: center;
  height: 31px;
  padding: 0 13px 0 12px;
}

.buttons button {
  margin-right: 24px;
}

.buttons button:last-child {
  margin-right: 0;
}

.buttons path {
  fill: none;
  stroke: #fff;
  stroke-width: 2;
}

.buttons .solid {
  fill: #fff;
  stroke: none;
}

.buttons text {
  fill: #fff;
  font-size: 10px;
  font-weight: 600;
  text-anchor: middle;
}

.buttons .volume {
  margin-right: 22px;
}

.clock {
  font-size: 13px;
  font-weight: 600;
}

.clock i {
  margin: 0 2px;
  font-style: normal;
}

.buttons .gear {
  position: relative;
  margin: 0 25px 0 auto;
}

.gear span {
  position: absolute;
  top: 4px;
  left: 10px;
  width: 13px;
  height: 9px;
  background: #00a0e9;
  font-size: 8px;
  line-height: 9px;
  font-weight: 700;
}
</style>
